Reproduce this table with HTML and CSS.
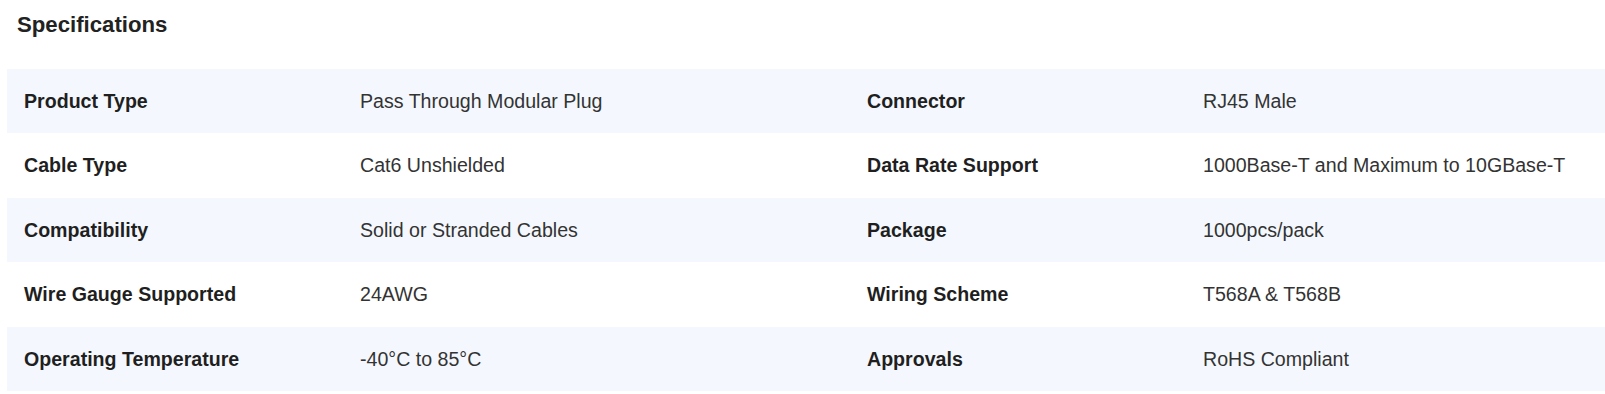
FILE: index.html
```html
<!DOCTYPE html>
<html lang="en">
<head>
<meta charset="utf-8">
<title>Specifications</title>
<link rel="stylesheet" href="styles.css">
</head>
<body>
<section class="specs">
  <h2 class="specs-title">Specifications</h2>
  <div class="specs-table">
    <div class="row shaded">
      <div class="cell label">Product Type</div>
      <div class="cell value">Pass Through Modular Plug</div>
      <div class="cell label">Connector</div>
      <div class="cell value">RJ45 Male</div>
    </div>
    <div class="row">
      <div class="cell label">Cable Type</div>
      <div class="cell value">Cat6 Unshielded</div>
      <div class="cell label">Data Rate Support</div>
      <div class="cell value">1000Base-T and Maximum to 10GBase-T</div>
    </div>
    <div class="row shaded">
      <div class="cell label">Compatibility</div>
      <div class="cell value">Solid or Stranded Cables</div>
      <div class="cell label">Package</div>
      <div class="cell value">1000pcs/pack</div>
    </div>
    <div class="row">
      <div class="cell label">Wire Gauge Supported</div>
      <div class="cell value">24AWG</div>
      <div class="cell label">Wiring Scheme</div>
      <div class="cell value">T568A &amp; T568B</div>
    </div>
    <div class="row shaded">
      <div class="cell label">Operating Temperature</div>
      <div class="cell value">-40°C to 85°C</div>
      <div class="cell label">Approvals</div>
      <div class="cell value">RoHS Compliant</div>
    </div>
  </div>
</section>
</body>
</html>
```
FILE: styles.css
```css
html, body {
  margin: 0;
  padding: 0;
  background: #ffffff;
  overflow: hidden;
}

body {
  font-family: "Liberation Sans", Arial, sans-serif;
  color: #333333;
}

.specs {
  padding: 0 0 0 7px;
}

.specs-title {
  margin: 0;
  padding: 12px 0 0 10px;
  font-size: 22.2px;
  line-height: 25px;
  font-weight: 700;
  color: #222222;
}

.specs-table {
  margin-top: 32px;
  display: flex;
  flex-direction: column;
}

.row {
  display: grid;
  grid-template-columns: 336px 507px 336px 1fr;
  background: #ffffff;
}

.row.shaded {
  background: #f4f8fe;
}

.cell {
  padding: 20px 17px;
  font-size: 19.6px;
  line-height: 24.4px;
  white-space: nowrap;
}

.label {
  font-weight: 700;
  color: #1f1f1f;
}

.value {
  color: #333333;
}
```
